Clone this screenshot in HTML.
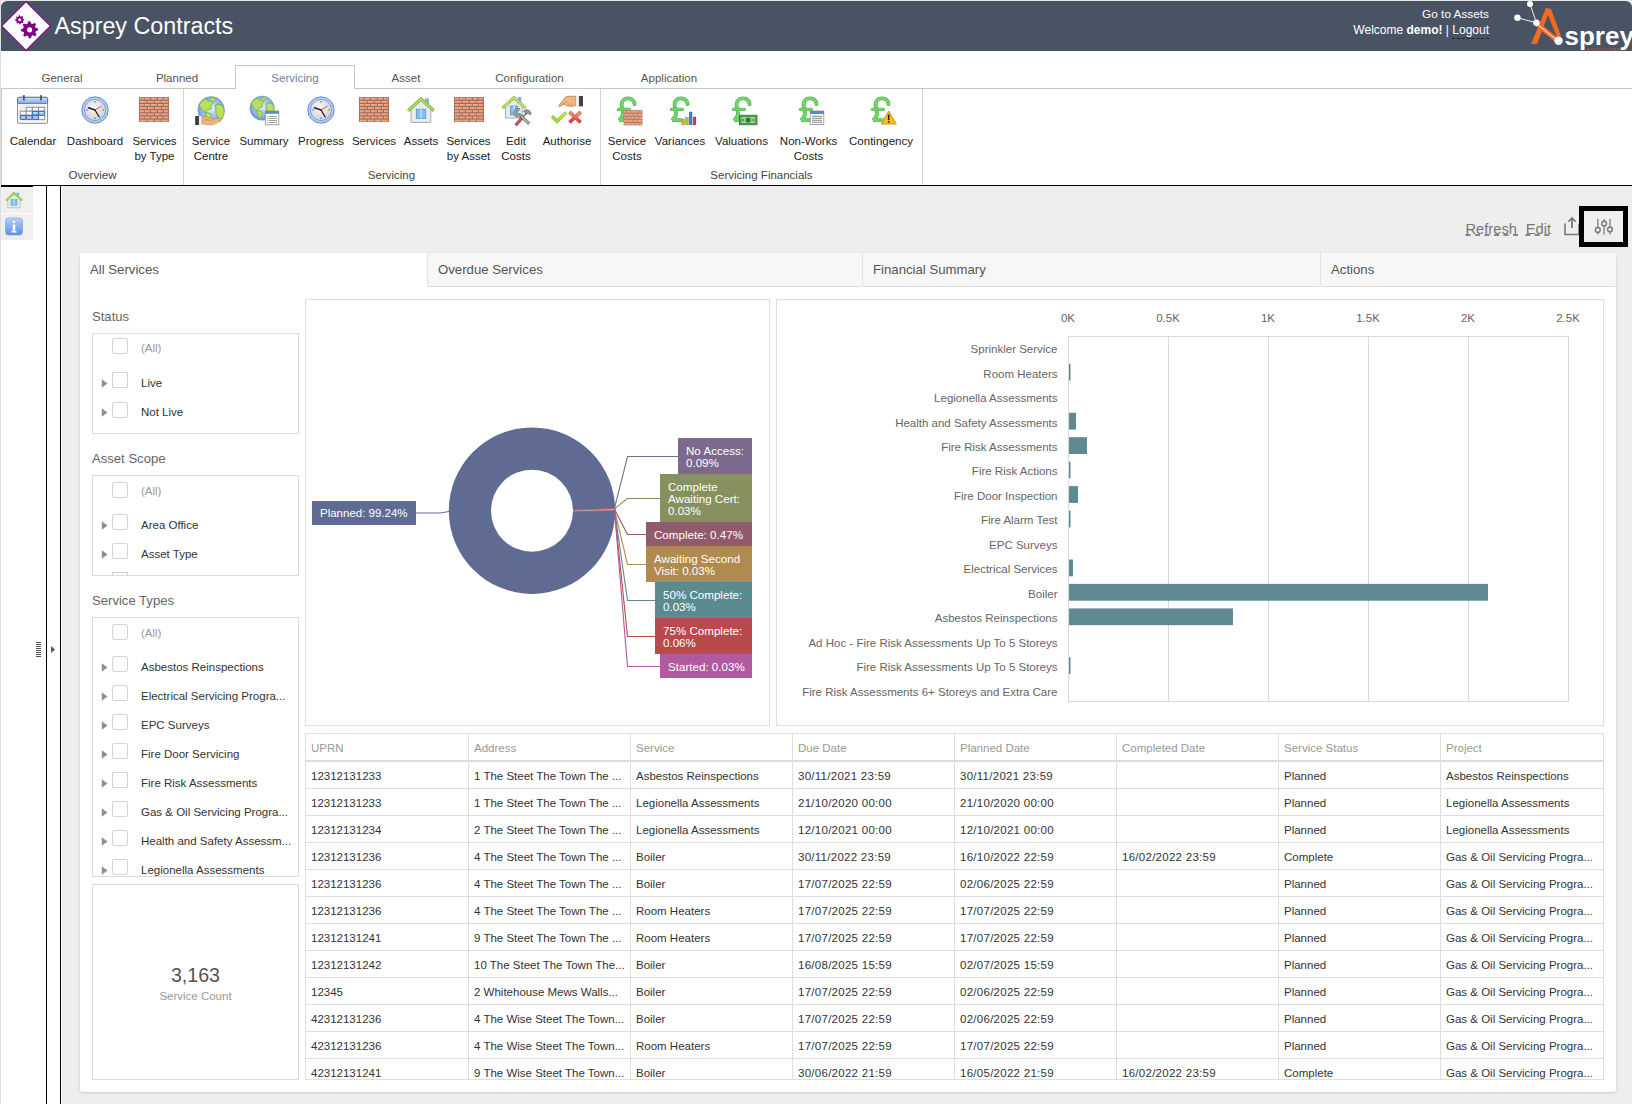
<!DOCTYPE html>
<html><head><meta charset="utf-8"><title>Asprey Contracts</title>
<style>
html,body{margin:0;padding:0;}
body{width:1632px;height:1104px;position:relative;overflow:hidden;background:#fff;font-family:"Liberation Sans", sans-serif;}
.t{position:absolute;white-space:nowrap;line-height:1;}
.b{position:absolute;box-sizing:border-box;}
</style></head><body>

<div class="b" style="left:0px;top:0px;width:1632px;height:1px;background:#e6e6e6"></div>
<div class="b" style="left:1px;top:1px;width:1631px;height:50px;background:#4a5364;border-radius:6px 6px 0 0"></div>
<svg class="b" style="left:0px;top:0px;" width="54" height="52" viewBox="0 0 54 52">
<polygon points="26,1.5 50.5,26 26,50.5 1.5,26" fill="#fff" stroke="#7a1a86" stroke-width="1.4"/>
<g fill="#800080"><polygon points="38.11,28.54 38.19,30.22 35.81,31.36 35.39,32.54 36.51,34.92 35.38,36.17 32.89,35.29 31.76,35.83 30.86,38.31 29.18,38.39 28.04,36.01 26.86,35.59 24.48,36.71 23.23,35.58 24.11,33.09 23.57,31.96 21.09,31.06 21.01,29.38 23.39,28.24 23.81,27.06 22.69,24.68 23.82,23.43 26.31,24.31 27.44,23.77 28.34,21.29 30.02,21.21 31.16,23.59 32.34,24.01 34.72,22.89 35.97,24.02 35.09,26.51 35.63,27.64"/><polygon points="24.25,19.13 24.29,20.03 23.00,20.63 22.77,21.25 23.39,22.54 22.79,23.21 21.45,22.72 20.85,23.00 20.37,24.35 19.47,24.39 18.87,23.10 18.25,22.87 16.96,23.49 16.29,22.89 16.78,21.55 16.50,20.95 15.15,20.47 15.11,19.57 16.40,18.97 16.63,18.35 16.01,17.06 16.61,16.39 17.95,16.88 18.55,16.60 19.03,15.25 19.93,15.21 20.53,16.50 21.15,16.73 22.44,16.11 23.11,16.71 22.62,18.05 22.90,18.65"/></g>
<circle cx="29.6" cy="29.8" r="2.6" fill="#fff"/>
<circle cx="19.7" cy="19.8" r="1.5" fill="#fff"/>
</svg>
<div class="t" style="left:54.5px;top:14.9px;font-size:23.3px;color:#fff;font-weight:normal;">Asprey Contracts</div>
<div class="t" style="left:689.0px;width:800px;text-align:right;top:8.7px;font-size:11.8px;color:#fff;font-weight:normal;">Go to Assets</div>
<div class="t" style="left:689px;width:800px;text-align:right;top:24.3px;font-size:12px;color:#fff">Welcome <b>demo!</b> | <span style="border-bottom:1px dashed #222;padding-bottom:1px">Logout</span></div>
<svg class="b" style="left:1500px;top:0px;" width="132" height="52" viewBox="0 0 132 52">
<polygon points="31,44 37,44 48,15 57,37 61,36 51,9 46,8" fill="#f26b21"/>
<line x1="37" y1="24" x2="58" y2="41" stroke="#f26b21" stroke-width="5"/>
<line x1="37" y1="24" x2="58" y2="41" stroke="#fff" stroke-width="1"/>
<line x1="30" y1="4" x2="36.4" y2="22.7" stroke="#fff" stroke-width="0.9"/>
<line x1="17.4" y1="17.8" x2="36.4" y2="22.7" stroke="#fff" stroke-width="0.9"/>
<circle cx="30" cy="4" r="3" fill="#fff"/>
<circle cx="17.4" cy="17.8" r="3.2" fill="#fff"/>
<circle cx="36.4" cy="22.7" r="3.2" fill="#fff"/>
<circle cx="58.5" cy="40.8" r="4.2" fill="#fff"/>
<text x="64.5" y="44.8" font-family="Liberation Sans" font-weight="bold" font-size="26" fill="#fff" letter-spacing="0">sprey</text>
<text x="87" y="50.5" font-family="Liberation Sans" font-size="4" fill="#d9692a" letter-spacing="1.2">SOLUTIONS</text>
</svg>
<svg style="position:absolute;width:0;height:0">
<defs>
<radialGradient id="gClockFace" cx="0.45" cy="0.4" r="0.7"><stop offset="0" stop-color="#fafafa"/><stop offset="1" stop-color="#c9c9c9"/></radialGradient>
<linearGradient id="gClockRing" x1="0" y1="0" x2="0" y2="1"><stop offset="0" stop-color="#a9c2f0"/><stop offset="1" stop-color="#4f7fd6"/></linearGradient>
<radialGradient id="gGlobe" cx="0.5" cy="0.45" r="0.6"><stop offset="0" stop-color="#e6f0fd"/><stop offset="0.65" stop-color="#8fb3ee"/><stop offset="1" stop-color="#5a86d6"/></radialGradient>
<linearGradient id="gBrick" x1="0" y1="0" x2="1" y2="1"><stop offset="0" stop-color="#f7b898"/><stop offset="1" stop-color="#df8f6e"/></linearGradient>
<linearGradient id="gCalHead" x1="0" y1="0" x2="0" y2="1"><stop offset="0" stop-color="#8ab3f0"/><stop offset="1" stop-color="#4d82d6"/></linearGradient>
<linearGradient id="gInfo" x1="0" y1="0" x2="0" y2="1"><stop offset="0" stop-color="#b6d0f7"/><stop offset="1" stop-color="#5f8fe4"/></linearGradient>















</defs>
</svg>
<div class="b" style="left:1px;top:88px;width:1631px;height:1px;background:#c6c6c6"></div>
<div class="b" style="left:1px;top:88px;width:1px;height:98px;background:#c6c6c6"></div>
<div class="b" style="left:235px;top:65px;width:120px;height:24px;background:#fff;border:1px solid #c6c6c6;border-bottom:none"></div>
<div class="t" style="left:-338.0px;width:800px;text-align:center;top:72.8px;font-size:11.5px;color:#555;font-weight:normal;">General</div>
<div class="t" style="left:-223.0px;width:800px;text-align:center;top:72.8px;font-size:11.5px;color:#555;font-weight:normal;">Planned</div>
<div class="t" style="left:6.0px;width:800px;text-align:center;top:72.8px;font-size:11.5px;color:#555;font-weight:normal;">Asset</div>
<div class="t" style="left:129.5px;width:800px;text-align:center;top:72.8px;font-size:11.5px;color:#555;font-weight:normal;">Configuration</div>
<div class="t" style="left:269.0px;width:800px;text-align:center;top:72.8px;font-size:11.5px;color:#555;font-weight:normal;">Application</div>
<div class="t" style="left:-105.0px;width:800px;text-align:center;top:72.8px;font-size:11.5px;color:#6e7fa3;font-weight:normal;">Servicing</div>
<div class="b" style="left:183px;top:89px;width:1px;height:96px;background:#d4d4d4"></div>
<div class="b" style="left:600px;top:89px;width:1px;height:96px;background:#d4d4d4"></div>
<div class="b" style="left:922px;top:89px;width:1px;height:96px;background:#d4d4d4"></div>
<div class="b" style="left:1px;top:185px;width:1631px;height:1px;background:#000"></div>
<div class="t" style="left:-367.0px;width:800px;text-align:center;top:136.1px;font-size:11.5px;color:#222;font-weight:normal;">Calendar</div>
<div class="t" style="left:-305.0px;width:800px;text-align:center;top:136.1px;font-size:11.5px;color:#222;font-weight:normal;">Dashboard</div>
<div class="t" style="left:-245.5px;width:800px;text-align:center;top:135.6px;font-size:11.5px;color:#222;font-weight:normal;">Services</div>
<div class="t" style="left:-245.5px;width:800px;text-align:center;top:150.6px;font-size:11.5px;color:#222;font-weight:normal;">by Type</div>
<div class="t" style="left:-189.0px;width:800px;text-align:center;top:135.6px;font-size:11.5px;color:#222;font-weight:normal;">Service</div>
<div class="t" style="left:-189.0px;width:800px;text-align:center;top:150.6px;font-size:11.5px;color:#222;font-weight:normal;">Centre</div>
<div class="t" style="left:-136.0px;width:800px;text-align:center;top:136.1px;font-size:11.5px;color:#222;font-weight:normal;">Summary</div>
<div class="t" style="left:-79.0px;width:800px;text-align:center;top:136.1px;font-size:11.5px;color:#222;font-weight:normal;">Progress</div>
<div class="t" style="left:-26.0px;width:800px;text-align:center;top:136.1px;font-size:11.5px;color:#222;font-weight:normal;">Services</div>
<div class="t" style="left:21.0px;width:800px;text-align:center;top:136.1px;font-size:11.5px;color:#222;font-weight:normal;">Assets</div>
<div class="t" style="left:68.5px;width:800px;text-align:center;top:135.6px;font-size:11.5px;color:#222;font-weight:normal;">Services</div>
<div class="t" style="left:68.5px;width:800px;text-align:center;top:150.6px;font-size:11.5px;color:#222;font-weight:normal;">by Asset</div>
<div class="t" style="left:116.0px;width:800px;text-align:center;top:135.6px;font-size:11.5px;color:#222;font-weight:normal;">Edit</div>
<div class="t" style="left:116.0px;width:800px;text-align:center;top:150.6px;font-size:11.5px;color:#222;font-weight:normal;">Costs</div>
<div class="t" style="left:167.0px;width:800px;text-align:center;top:136.1px;font-size:11.5px;color:#222;font-weight:normal;">Authorise</div>
<div class="t" style="left:227.0px;width:800px;text-align:center;top:135.6px;font-size:11.5px;color:#222;font-weight:normal;">Service</div>
<div class="t" style="left:227.0px;width:800px;text-align:center;top:150.6px;font-size:11.5px;color:#222;font-weight:normal;">Costs</div>
<div class="t" style="left:280.0px;width:800px;text-align:center;top:136.1px;font-size:11.5px;color:#222;font-weight:normal;">Variances</div>
<div class="t" style="left:341.5px;width:800px;text-align:center;top:136.1px;font-size:11.5px;color:#222;font-weight:normal;">Valuations</div>
<div class="t" style="left:408.5px;width:800px;text-align:center;top:135.6px;font-size:11.5px;color:#222;font-weight:normal;">Non-Works</div>
<div class="t" style="left:408.5px;width:800px;text-align:center;top:150.6px;font-size:11.5px;color:#222;font-weight:normal;">Costs</div>
<div class="t" style="left:481.0px;width:800px;text-align:center;top:136.1px;font-size:11.5px;color:#222;font-weight:normal;">Contingency</div>
<div class="t" style="left:-307.5px;width:800px;text-align:center;top:169.8px;font-size:11.5px;color:#444;font-weight:normal;">Overview</div>
<div class="t" style="left:-8.5px;width:800px;text-align:center;top:169.8px;font-size:11.5px;color:#444;font-weight:normal;">Servicing</div>
<div class="t" style="left:361.5px;width:800px;text-align:center;top:169.8px;font-size:11.5px;color:#444;font-weight:normal;">Servicing Financials</div>
<svg class="b" style="left:17.0px;top:94px" width="32" height="32" viewBox="0 0 32 32"><svg x="0" y="0" width="32" height="32" viewBox="0 0 32 32" style="overflow:visible">
<linearGradient id="gCalH2" x1="0" y1="0" x2="0" y2="1"><stop offset="0" stop-color="#cfe2fb"/><stop offset="1" stop-color="#7fa6e9"/></linearGradient>
<rect x="0.6" y="3.3" width="30" height="26" rx="1.3" fill="#fff" stroke="#888" stroke-width="1"/>
<rect x="0.6" y="3.3" width="30" height="6.3" rx="1.2" fill="url(#gCalH2)" stroke="#4b6fcb" stroke-width="0.9"/>
<rect x="2.4" y="11" width="26.4" height="16.5" fill="#ededed"/>
<rect x="9.2" y="13.3" width="6.10" height="3.90" fill="#fafafa" stroke="#8a8a8a" stroke-width="0.9"/><rect x="15.3" y="13.3" width="6.20" height="3.90" fill="#fafafa" stroke="#8a8a8a" stroke-width="0.9"/><rect x="21.5" y="13.3" width="6.20" height="3.90" fill="#fafafa" stroke="#8a8a8a" stroke-width="0.9"/><rect x="3.2" y="17.2" width="6.00" height="4.10" fill="#fafafa" stroke="#8a8a8a" stroke-width="0.9"/><rect x="9.2" y="17.2" width="6.10" height="4.10" fill="#fafafa" stroke="#8a8a8a" stroke-width="0.9"/><rect x="21.5" y="21.3" width="6.20" height="4.30" fill="#fafafa" stroke="#8a8a8a" stroke-width="0.9"/><rect x="15.50" y="17.40" width="5.80" height="3.70" rx="0.8" fill="#cdeefc" stroke="#3f6fc6" stroke-width="1.3"/><path d="M16.90 19.25 H19.90" stroke="#7cc4f0" stroke-width="0.9"/><rect x="21.70" y="17.40" width="5.80" height="3.70" rx="0.8" fill="#cdeefc" stroke="#3f6fc6" stroke-width="1.3"/><path d="M23.10 19.25 H26.10" stroke="#7cc4f0" stroke-width="0.9"/><rect x="3.40" y="21.50" width="5.60" height="3.90" rx="0.8" fill="#cdeefc" stroke="#3f6fc6" stroke-width="1.3"/><path d="M4.80 23.45 H7.60" stroke="#7cc4f0" stroke-width="0.9"/><rect x="9.40" y="21.50" width="5.70" height="3.90" rx="0.8" fill="#cdeefc" stroke="#3f6fc6" stroke-width="1.3"/><path d="M10.80 23.45 H13.70" stroke="#7cc4f0" stroke-width="0.9"/><rect x="15.50" y="21.50" width="5.80" height="3.90" rx="0.8" fill="#cdeefc" stroke="#3f6fc6" stroke-width="1.3"/><path d="M16.90 23.45 H19.90" stroke="#7cc4f0" stroke-width="0.9"/>
<rect x="6" y="1.1" width="1.8" height="5.5" rx="0.6" fill="#555"/><rect x="23.1" y="1.1" width="1.8" height="5.5" rx="0.6" fill="#555"/>
</svg></svg>
<svg class="b" style="left:79.0px;top:94px" width="32" height="32" viewBox="0 0 32 32"><svg x="0" y="0" width="32" height="32" viewBox="0 0 32 32" style="overflow:visible">
<circle cx="16" cy="16" r="13.2" fill="#9fbff3" stroke="#5f86d6" stroke-width="0.9"/>
<circle cx="16" cy="16" r="11.8" fill="none" stroke="#c8dcfa" stroke-width="0.8"/>
<circle cx="16" cy="16" r="10.6" fill="url(#gClockFace)" stroke="#6a8fdc" stroke-width="0.7"/>
<rect x="15.3" y="7.2" width="1.4" height="1.4" fill="#777"/><rect x="15.3" y="23.4" width="1.4" height="1.4" fill="#777"/>
<rect x="7.2" y="15.3" width="1.4" height="1.4" fill="#777"/><rect x="23.4" y="15.3" width="1.4" height="1.4" fill="#777"/>
<path d="M16 16 L9.5 13.8" stroke="#222" stroke-width="1.6" stroke-linecap="round"/>
<path d="M16 16 L20.2 23" stroke="#222" stroke-width="1.3" stroke-linecap="round"/>
<path d="M16 16 L22.5 12.2" stroke="#d22" stroke-width="0.8"/>
</svg></svg>
<svg class="b" style="left:138.0px;top:94px" width="32" height="32" viewBox="0 0 32 32"><svg x="0" y="0" width="32" height="32" viewBox="0 0 32 32" style="overflow:visible"><rect x="1" y="3" width="30" height="25" fill="#9c6b59"/><rect x="1.90" y="3.75" width="4.20" height="2.02" fill="url(#gBrick)"/><rect x="6.80" y="3.75" width="5.40" height="2.02" fill="url(#gBrick)"/><rect x="13.10" y="3.75" width="5.90" height="2.02" fill="url(#gBrick)"/><rect x="19.90" y="3.75" width="5.20" height="2.02" fill="url(#gBrick)"/><rect x="26.00" y="3.75" width="4.20" height="2.02" fill="url(#gBrick)"/><rect x="1.90" y="6.88" width="7.30" height="2.02" fill="url(#gBrick)"/><rect x="9.90" y="6.88" width="6.20" height="2.02" fill="url(#gBrick)"/><rect x="17.00" y="6.88" width="6.10" height="2.02" fill="url(#gBrick)"/><rect x="23.90" y="6.88" width="6.30" height="2.02" fill="url(#gBrick)"/><rect x="1.90" y="10.00" width="4.20" height="2.02" fill="url(#gBrick)"/><rect x="6.80" y="10.00" width="5.40" height="2.02" fill="url(#gBrick)"/><rect x="13.10" y="10.00" width="5.90" height="2.02" fill="url(#gBrick)"/><rect x="19.90" y="10.00" width="5.20" height="2.02" fill="url(#gBrick)"/><rect x="26.00" y="10.00" width="4.20" height="2.02" fill="url(#gBrick)"/><rect x="1.90" y="13.12" width="7.30" height="2.02" fill="url(#gBrick)"/><rect x="9.90" y="13.12" width="6.20" height="2.02" fill="url(#gBrick)"/><rect x="17.00" y="13.12" width="6.10" height="2.02" fill="url(#gBrick)"/><rect x="23.90" y="13.12" width="6.30" height="2.02" fill="url(#gBrick)"/><rect x="1.90" y="16.25" width="4.20" height="2.02" fill="url(#gBrick)"/><rect x="6.80" y="16.25" width="5.40" height="2.02" fill="url(#gBrick)"/><rect x="13.10" y="16.25" width="5.90" height="2.02" fill="url(#gBrick)"/><rect x="19.90" y="16.25" width="5.20" height="2.02" fill="url(#gBrick)"/><rect x="26.00" y="16.25" width="4.20" height="2.02" fill="url(#gBrick)"/><rect x="1.90" y="19.38" width="7.30" height="2.02" fill="url(#gBrick)"/><rect x="9.90" y="19.38" width="6.20" height="2.02" fill="url(#gBrick)"/><rect x="17.00" y="19.38" width="6.10" height="2.02" fill="url(#gBrick)"/><rect x="23.90" y="19.38" width="6.30" height="2.02" fill="url(#gBrick)"/><rect x="1.90" y="22.50" width="4.20" height="2.02" fill="url(#gBrick)"/><rect x="6.80" y="22.50" width="5.40" height="2.02" fill="url(#gBrick)"/><rect x="13.10" y="22.50" width="5.90" height="2.02" fill="url(#gBrick)"/><rect x="19.90" y="22.50" width="5.20" height="2.02" fill="url(#gBrick)"/><rect x="26.00" y="22.50" width="4.20" height="2.02" fill="url(#gBrick)"/><rect x="1.90" y="25.62" width="7.30" height="2.02" fill="url(#gBrick)"/><rect x="9.90" y="25.62" width="6.20" height="2.02" fill="url(#gBrick)"/><rect x="17.00" y="25.62" width="6.10" height="2.02" fill="url(#gBrick)"/><rect x="23.90" y="25.62" width="6.30" height="2.02" fill="url(#gBrick)"/></svg></svg>
<svg class="b" style="left:195.0px;top:94px" width="32" height="32" viewBox="0 0 32 32"><svg x="0" y="0" width="32" height="32" viewBox="0 0 32 32" style="overflow:visible">
<g transform="translate(0.9,1.6) scale(0.95)"><svg x="0" y="0" width="32" height="32" viewBox="0 0 32 32" style="overflow:visible">
<circle cx="16" cy="15" r="14" fill="url(#gGlobe)" stroke="#6a90d8" stroke-width="0.5"/>
<g fill="#b8e05c" stroke="#64a030" stroke-width="0.7">
<path d="M3.5 10 C5 6.5 8 4 11 3.5 L12.5 4.5 C12 6 13.5 6.5 15 5.5 L17.5 6.5 C18.5 8 16.5 9 16 10.5 C15.5 12 17 12.5 16 14 C14 15 12.5 14 11.5 15.5 C10.5 16.5 11 17.5 10.5 18 C8 17 6 15 5 13 C4.5 12 3.5 11 3.5 10Z"/>
<path d="M14 3 C16 2 19 1.8 21.5 2.8 C20.5 5 18.5 7 17 6.8 C15.8 5.8 15 4.5 14 3Z"/>
<path d="M10.5 18 C12.5 17.5 14.5 18.5 16 19.5 C17 21 16 22.5 14.8 24 C13.8 25.5 13 27 12.5 28 C11.5 26 11.2 23.5 10.8 21.5 C10.3 20.2 10 19 10.5 18Z"/>
<path d="M21 9.5 C23 8.5 26 9 28 10.5 C29.5 13 30 16 29.5 19.5 C29 22.5 27 25.5 25 27.5 C24 25.5 24 23.5 23 21.5 C22 19.5 20.5 18.5 21 16.5 C21.5 14.5 20 12 21 9.5Z"/>
</g>
</svg></g>
<rect x="0.2" y="22" width="3.8" height="9" fill="#3a3a3a"/>
<rect x="4" y="22" width="3" height="9" fill="#f2f2f2" stroke="#bbb" stroke-width="0.4"/>
<path d="M7 23 C10 22.5 14 23 17 25 C20 25.3 24 24 27 23.5 C26 26.5 22 30 16.5 31 C12.5 31.2 9.5 30.5 7 29.5Z" fill="#edb57d" stroke="#b98050" stroke-width="0.5"/>
<path d="M9 26 C12 25.5 15 26 17 27" fill="none" stroke="#b98050" stroke-width="0.6"/>
</svg></svg>
<svg class="b" style="left:248.0px;top:94px" width="32" height="32" viewBox="0 0 32 32"><svg x="0" y="0" width="32" height="32" viewBox="0 0 32 32" style="overflow:visible">
<g transform="translate(0.2,1.1) scale(0.87)"><svg x="0" y="0" width="32" height="32" viewBox="0 0 32 32" style="overflow:visible">
<circle cx="16" cy="15" r="14" fill="url(#gGlobe)" stroke="#6a90d8" stroke-width="0.5"/>
<g fill="#b8e05c" stroke="#64a030" stroke-width="0.7">
<path d="M3.5 10 C5 6.5 8 4 11 3.5 L12.5 4.5 C12 6 13.5 6.5 15 5.5 L17.5 6.5 C18.5 8 16.5 9 16 10.5 C15.5 12 17 12.5 16 14 C14 15 12.5 14 11.5 15.5 C10.5 16.5 11 17.5 10.5 18 C8 17 6 15 5 13 C4.5 12 3.5 11 3.5 10Z"/>
<path d="M14 3 C16 2 19 1.8 21.5 2.8 C20.5 5 18.5 7 17 6.8 C15.8 5.8 15 4.5 14 3Z"/>
<path d="M10.5 18 C12.5 17.5 14.5 18.5 16 19.5 C17 21 16 22.5 14.8 24 C13.8 25.5 13 27 12.5 28 C11.5 26 11.2 23.5 10.8 21.5 C10.3 20.2 10 19 10.5 18Z"/>
<path d="M21 9.5 C23 8.5 26 9 28 10.5 C29.5 13 30 16 29.5 19.5 C29 22.5 27 25.5 25 27.5 C24 25.5 24 23.5 23 21.5 C22 19.5 20.5 18.5 21 16.5 C21.5 14.5 20 12 21 9.5Z"/>
</g>
</svg></g>
<rect x="17.3" y="17" width="13.5" height="13.8" fill="#fff" stroke="#8c8c8c" stroke-width="0.8"/>
<rect x="17.3" y="17" width="13.5" height="2.8" fill="#4f8ed0"/>
<g stroke="#666" stroke-width="0.6"><path d="M19 22.5 H20 M21 22.5 H29"/><path d="M19 24.5 H20 M21 24.5 H29"/><path d="M19 26.5 H20 M21 26.5 H29"/><path d="M19 28.5 H20 M21 28.5 H29"/></g>
</svg></svg>
<svg class="b" style="left:305.0px;top:94px" width="32" height="32" viewBox="0 0 32 32"><svg x="0" y="0" width="32" height="32" viewBox="0 0 32 32" style="overflow:visible">
<circle cx="16" cy="16" r="13.2" fill="#9fbff3" stroke="#5f86d6" stroke-width="0.9"/>
<circle cx="16" cy="16" r="11.8" fill="none" stroke="#c8dcfa" stroke-width="0.8"/>
<circle cx="16" cy="16" r="10.6" fill="url(#gClockFace)" stroke="#6a8fdc" stroke-width="0.7"/>
<rect x="15.3" y="7.2" width="1.4" height="1.4" fill="#777"/><rect x="15.3" y="23.4" width="1.4" height="1.4" fill="#777"/>
<rect x="7.2" y="15.3" width="1.4" height="1.4" fill="#777"/><rect x="23.4" y="15.3" width="1.4" height="1.4" fill="#777"/>
<path d="M16 16 L9.5 13.8" stroke="#222" stroke-width="1.6" stroke-linecap="round"/>
<path d="M16 16 L20.2 23" stroke="#222" stroke-width="1.3" stroke-linecap="round"/>
<path d="M16 16 L22.5 12.2" stroke="#d22" stroke-width="0.8"/>
</svg></svg>
<svg class="b" style="left:358.0px;top:94px" width="32" height="32" viewBox="0 0 32 32"><svg x="0" y="0" width="32" height="32" viewBox="0 0 32 32" style="overflow:visible"><rect x="1" y="3" width="30" height="25" fill="#9c6b59"/><rect x="1.90" y="3.75" width="4.20" height="2.02" fill="url(#gBrick)"/><rect x="6.80" y="3.75" width="5.40" height="2.02" fill="url(#gBrick)"/><rect x="13.10" y="3.75" width="5.90" height="2.02" fill="url(#gBrick)"/><rect x="19.90" y="3.75" width="5.20" height="2.02" fill="url(#gBrick)"/><rect x="26.00" y="3.75" width="4.20" height="2.02" fill="url(#gBrick)"/><rect x="1.90" y="6.88" width="7.30" height="2.02" fill="url(#gBrick)"/><rect x="9.90" y="6.88" width="6.20" height="2.02" fill="url(#gBrick)"/><rect x="17.00" y="6.88" width="6.10" height="2.02" fill="url(#gBrick)"/><rect x="23.90" y="6.88" width="6.30" height="2.02" fill="url(#gBrick)"/><rect x="1.90" y="10.00" width="4.20" height="2.02" fill="url(#gBrick)"/><rect x="6.80" y="10.00" width="5.40" height="2.02" fill="url(#gBrick)"/><rect x="13.10" y="10.00" width="5.90" height="2.02" fill="url(#gBrick)"/><rect x="19.90" y="10.00" width="5.20" height="2.02" fill="url(#gBrick)"/><rect x="26.00" y="10.00" width="4.20" height="2.02" fill="url(#gBrick)"/><rect x="1.90" y="13.12" width="7.30" height="2.02" fill="url(#gBrick)"/><rect x="9.90" y="13.12" width="6.20" height="2.02" fill="url(#gBrick)"/><rect x="17.00" y="13.12" width="6.10" height="2.02" fill="url(#gBrick)"/><rect x="23.90" y="13.12" width="6.30" height="2.02" fill="url(#gBrick)"/><rect x="1.90" y="16.25" width="4.20" height="2.02" fill="url(#gBrick)"/><rect x="6.80" y="16.25" width="5.40" height="2.02" fill="url(#gBrick)"/><rect x="13.10" y="16.25" width="5.90" height="2.02" fill="url(#gBrick)"/><rect x="19.90" y="16.25" width="5.20" height="2.02" fill="url(#gBrick)"/><rect x="26.00" y="16.25" width="4.20" height="2.02" fill="url(#gBrick)"/><rect x="1.90" y="19.38" width="7.30" height="2.02" fill="url(#gBrick)"/><rect x="9.90" y="19.38" width="6.20" height="2.02" fill="url(#gBrick)"/><rect x="17.00" y="19.38" width="6.10" height="2.02" fill="url(#gBrick)"/><rect x="23.90" y="19.38" width="6.30" height="2.02" fill="url(#gBrick)"/><rect x="1.90" y="22.50" width="4.20" height="2.02" fill="url(#gBrick)"/><rect x="6.80" y="22.50" width="5.40" height="2.02" fill="url(#gBrick)"/><rect x="13.10" y="22.50" width="5.90" height="2.02" fill="url(#gBrick)"/><rect x="19.90" y="22.50" width="5.20" height="2.02" fill="url(#gBrick)"/><rect x="26.00" y="22.50" width="4.20" height="2.02" fill="url(#gBrick)"/><rect x="1.90" y="25.62" width="7.30" height="2.02" fill="url(#gBrick)"/><rect x="9.90" y="25.62" width="6.20" height="2.02" fill="url(#gBrick)"/><rect x="17.00" y="25.62" width="6.10" height="2.02" fill="url(#gBrick)"/><rect x="23.90" y="25.62" width="6.30" height="2.02" fill="url(#gBrick)"/></svg></svg>
<svg class="b" style="left:405.0px;top:94px" width="32" height="32" viewBox="0 0 32 32"><svg x="0" y="0" width="32" height="32" viewBox="0 0 32 32" style="overflow:visible">
<rect x="20" y="4.4" width="4" height="7" fill="#8bb0e6"/>
<path d="M6 13 L6 28.5 L25.8 28.5 L25.8 13 L16 5Z" fill="#e9eaec" stroke="#a4a4a4" stroke-width="0.9"/>
<rect x="11.3" y="15.2" width="9.5" height="9.3" fill="#7cc1f5" stroke="#5a8fc8" stroke-width="0.7"/>
<rect x="15.4" y="15.2" width="1.3" height="9.3" fill="#d0e6f7"/>
<path d="M3.2 16.8 L16 5 L28.8 16.8" fill="none" stroke="#79b03a" stroke-width="3.2" stroke-linejoin="miter"/>
<path d="M3.2 16.8 L16 5 L28.8 16.8" fill="none" stroke="#acdc60" stroke-width="1.8" stroke-linejoin="miter"/>
</svg></svg>
<svg class="b" style="left:453.0px;top:94px" width="32" height="32" viewBox="0 0 32 32"><svg x="0" y="0" width="32" height="32" viewBox="0 0 32 32" style="overflow:visible"><rect x="1" y="3" width="30" height="25" fill="#9c6b59"/><rect x="1.90" y="3.75" width="4.20" height="2.02" fill="url(#gBrick)"/><rect x="6.80" y="3.75" width="5.40" height="2.02" fill="url(#gBrick)"/><rect x="13.10" y="3.75" width="5.90" height="2.02" fill="url(#gBrick)"/><rect x="19.90" y="3.75" width="5.20" height="2.02" fill="url(#gBrick)"/><rect x="26.00" y="3.75" width="4.20" height="2.02" fill="url(#gBrick)"/><rect x="1.90" y="6.88" width="7.30" height="2.02" fill="url(#gBrick)"/><rect x="9.90" y="6.88" width="6.20" height="2.02" fill="url(#gBrick)"/><rect x="17.00" y="6.88" width="6.10" height="2.02" fill="url(#gBrick)"/><rect x="23.90" y="6.88" width="6.30" height="2.02" fill="url(#gBrick)"/><rect x="1.90" y="10.00" width="4.20" height="2.02" fill="url(#gBrick)"/><rect x="6.80" y="10.00" width="5.40" height="2.02" fill="url(#gBrick)"/><rect x="13.10" y="10.00" width="5.90" height="2.02" fill="url(#gBrick)"/><rect x="19.90" y="10.00" width="5.20" height="2.02" fill="url(#gBrick)"/><rect x="26.00" y="10.00" width="4.20" height="2.02" fill="url(#gBrick)"/><rect x="1.90" y="13.12" width="7.30" height="2.02" fill="url(#gBrick)"/><rect x="9.90" y="13.12" width="6.20" height="2.02" fill="url(#gBrick)"/><rect x="17.00" y="13.12" width="6.10" height="2.02" fill="url(#gBrick)"/><rect x="23.90" y="13.12" width="6.30" height="2.02" fill="url(#gBrick)"/><rect x="1.90" y="16.25" width="4.20" height="2.02" fill="url(#gBrick)"/><rect x="6.80" y="16.25" width="5.40" height="2.02" fill="url(#gBrick)"/><rect x="13.10" y="16.25" width="5.90" height="2.02" fill="url(#gBrick)"/><rect x="19.90" y="16.25" width="5.20" height="2.02" fill="url(#gBrick)"/><rect x="26.00" y="16.25" width="4.20" height="2.02" fill="url(#gBrick)"/><rect x="1.90" y="19.38" width="7.30" height="2.02" fill="url(#gBrick)"/><rect x="9.90" y="19.38" width="6.20" height="2.02" fill="url(#gBrick)"/><rect x="17.00" y="19.38" width="6.10" height="2.02" fill="url(#gBrick)"/><rect x="23.90" y="19.38" width="6.30" height="2.02" fill="url(#gBrick)"/><rect x="1.90" y="22.50" width="4.20" height="2.02" fill="url(#gBrick)"/><rect x="6.80" y="22.50" width="5.40" height="2.02" fill="url(#gBrick)"/><rect x="13.10" y="22.50" width="5.90" height="2.02" fill="url(#gBrick)"/><rect x="19.90" y="22.50" width="5.20" height="2.02" fill="url(#gBrick)"/><rect x="26.00" y="22.50" width="4.20" height="2.02" fill="url(#gBrick)"/><rect x="1.90" y="25.62" width="7.30" height="2.02" fill="url(#gBrick)"/><rect x="9.90" y="25.62" width="6.20" height="2.02" fill="url(#gBrick)"/><rect x="17.00" y="25.62" width="6.10" height="2.02" fill="url(#gBrick)"/><rect x="23.90" y="25.62" width="6.30" height="2.02" fill="url(#gBrick)"/></svg></svg>
<svg class="b" style="left:500.0px;top:94px" width="32" height="32" viewBox="0 0 32 32"><svg x="0" y="0" width="32" height="32" viewBox="0 0 32 32" style="overflow:visible">
<rect x="18" y="3" width="3.2" height="6" fill="#8bb0e6"/>
<path d="M5.5 12 L5.5 24 L22.3 24 L22.3 12 L14 5Z" fill="#e9eaec" stroke="#a4a4a4" stroke-width="0.9"/>
<rect x="10.3" y="12" width="7.5" height="9" fill="#7cc1f5" stroke="#5a8fc8" stroke-width="0.7"/>
<rect x="13.5" y="12" width="1.2" height="9" fill="#cfe6f7"/>
<path d="M2.4 14 L14 3.6 L25.5 14" fill="none" stroke="#7db53a" stroke-width="2.9" stroke-linejoin="miter"/>
<path d="M2.4 14 L14 3.6 L25.5 14" fill="none" stroke="#c2e874" stroke-width="1.6" stroke-linejoin="miter"/>
<path d="M22.5 23.5 L16.6 30.3" stroke="#7a3a44" stroke-width="3.2" stroke-linecap="round"/>
<path d="M22.5 23.5 L16.6 30.3" stroke="#c75a6a" stroke-width="2.1" stroke-linecap="round"/>
<path d="M22 24 L26.3 19" stroke="#777" stroke-width="1.6"/>
<path d="M23.5 17 C25.5 15.3 28.5 15.3 31 18.5 L30.5 21 C29 19.5 27.5 19.2 26.5 20.2 Z" fill="#9a9a9a" stroke="#555" stroke-width="0.7"/>
<path d="M18.5 19.8 L29.3 29.8" stroke="#555" stroke-width="3"/>
<path d="M18.5 19.8 L29.3 29.8" stroke="#c4c4c4" stroke-width="1.6"/>
<path d="M19.6 15.8 A3.3 3.3 0 1 0 20.7 20.8" fill="none" stroke="#555" stroke-width="2.6"/>
<path d="M19.6 15.8 A3.3 3.3 0 1 0 20.7 20.8" fill="none" stroke="#bdbdbd" stroke-width="1.2"/>
</svg></svg>
<svg class="b" style="left:551.0px;top:94px" width="32" height="32" viewBox="0 0 32 32"><svg x="0" y="0" width="32" height="32" viewBox="0 0 32 32" style="overflow:visible">
<linearGradient id="gX" x1="0" y1="0" x2="0" y2="1"><stop offset="0" stop-color="#ec9a6c"/><stop offset="1" stop-color="#de4040"/></linearGradient>
<linearGradient id="gChk" x1="0" y1="1" x2="1" y2="0"><stop offset="0" stop-color="#9ccc30"/><stop offset="1" stop-color="#cfe860"/></linearGradient>
<path d="M7.7 11.9 L14.5 3.2 C15.2 2.5 16 2.2 17 2.2 L25 2.4 L25 11.6 L22.2 12 C21.2 12.8 19.9 12.7 19.3 11.9 C18.6 12.4 17.3 12.3 16.8 11.6 C16 12.1 14.9 11.9 14.5 11.1 L13 10 L8.8 12.6Z" fill="#efb782" stroke="#a86e3a" stroke-width="0.7" stroke-linejoin="round"/>
<path d="M12.5 9.8 L16.5 7.2 M16.3 11.4 L18.8 9 M19.2 11.8 L21.6 9.4" stroke="#b27a45" stroke-width="0.6"/>
<rect x="25" y="2" width="2.9" height="10.3" fill="#f4f4f4" stroke="#c8c8c8" stroke-width="0.4"/>
<rect x="28" y="2" width="4" height="10.3" fill="#444"/>
<path d="M2.2 23.4 L6.1 27.3 L14 19.6" fill="none" stroke="#8ab52e" stroke-width="3.4" stroke-linecap="square"/>
<path d="M2.2 23.4 L6.1 27.3 L14 19.6" fill="none" stroke="url(#gChk)" stroke-width="2.4" stroke-linecap="square"/>
<path d="M19.8 19.2 L28.4 27.2 M28.4 19.2 L19.8 27.2" stroke="#d84848" stroke-width="3.6" stroke-linecap="square"/>
<path d="M19.8 19.2 L28.4 27.2 M28.4 19.2 L19.8 27.2" stroke="url(#gX)" stroke-width="2.4" stroke-linecap="square"/>
</svg></svg>
<svg class="b" style="left:611.0px;top:94px" width="32" height="32" viewBox="0 0 32 32"><svg x="0" y="0" width="32" height="32" viewBox="0 0 32 32" style="overflow:visible"><svg x="0" y="0" width="32" height="32" viewBox="0 0 32 32" style="overflow:visible">
<g transform="translate(6.4,2.6)">
<path d="M17.2 7.5 C16.5 3.8 13.8 1.8 10.5 1.8 C6.5 1.8 4 4.5 4.2 8.5 C4.4 12 5.6 14 5.6 17 C5.6 20 3.8 22 1.8 23.8 C5 22.6 7.5 23.2 11.5 23.8" fill="none" stroke="#4fae46" stroke-width="3.8" stroke-linecap="round"/>
<path d="M17.2 7.5 C16.5 3.8 13.8 1.8 10.5 1.8 C6.5 1.8 4 4.5 4.2 8.5 C4.4 12 5.6 14 5.6 17 C5.6 20 3.8 22 1.8 23.8 C5 22.6 7.5 23.2 11.5 23.8" fill="none" stroke="#71d66b" stroke-width="2.6" stroke-linecap="round"/>
<path d="M1.2 12.8 H11.8" stroke="#4fae46" stroke-width="3.4" stroke-linecap="round"/>
<path d="M1.2 12.8 H11.8" stroke="#71d66b" stroke-width="2.2" stroke-linecap="round"/>
</g>
</svg><rect x="12.7" y="16.1" width="18.7" height="15.2" fill="#9c6b59"/><rect x="13.26" y="16.57" width="2.62" height="2.35" fill="url(#gBrick)"/><rect x="16.32" y="16.57" width="3.37" height="2.35" fill="url(#gBrick)"/><rect x="20.24" y="16.57" width="3.68" height="2.35" fill="url(#gBrick)"/><rect x="24.48" y="16.57" width="3.24" height="2.35" fill="url(#gBrick)"/><rect x="28.28" y="16.57" width="2.62" height="2.35" fill="url(#gBrick)"/><rect x="13.26" y="19.61" width="4.55" height="2.35" fill="url(#gBrick)"/><rect x="18.25" y="19.61" width="3.86" height="2.35" fill="url(#gBrick)"/><rect x="22.67" y="19.61" width="3.80" height="2.35" fill="url(#gBrick)"/><rect x="26.97" y="19.61" width="3.93" height="2.35" fill="url(#gBrick)"/><rect x="13.26" y="22.65" width="2.62" height="2.35" fill="url(#gBrick)"/><rect x="16.32" y="22.65" width="3.37" height="2.35" fill="url(#gBrick)"/><rect x="20.24" y="22.65" width="3.68" height="2.35" fill="url(#gBrick)"/><rect x="24.48" y="22.65" width="3.24" height="2.35" fill="url(#gBrick)"/><rect x="28.28" y="22.65" width="2.62" height="2.35" fill="url(#gBrick)"/><rect x="13.26" y="25.69" width="4.55" height="2.35" fill="url(#gBrick)"/><rect x="18.25" y="25.69" width="3.86" height="2.35" fill="url(#gBrick)"/><rect x="22.67" y="25.69" width="3.80" height="2.35" fill="url(#gBrick)"/><rect x="26.97" y="25.69" width="3.93" height="2.35" fill="url(#gBrick)"/><rect x="13.26" y="28.73" width="2.62" height="2.35" fill="url(#gBrick)"/><rect x="16.32" y="28.73" width="3.37" height="2.35" fill="url(#gBrick)"/><rect x="20.24" y="28.73" width="3.68" height="2.35" fill="url(#gBrick)"/><rect x="24.48" y="28.73" width="3.24" height="2.35" fill="url(#gBrick)"/><rect x="28.28" y="28.73" width="2.62" height="2.35" fill="url(#gBrick)"/></svg></svg>
<svg class="b" style="left:664.0px;top:94px" width="32" height="32" viewBox="0 0 32 32"><svg x="0" y="0" width="32" height="32" viewBox="0 0 32 32" style="overflow:visible"><svg x="0" y="0" width="32" height="32" viewBox="0 0 32 32" style="overflow:visible">
<g transform="translate(6.4,2.6)">
<path d="M17.2 7.5 C16.5 3.8 13.8 1.8 10.5 1.8 C6.5 1.8 4 4.5 4.2 8.5 C4.4 12 5.6 14 5.6 17 C5.6 20 3.8 22 1.8 23.8 C5 22.6 7.5 23.2 11.5 23.8" fill="none" stroke="#4fae46" stroke-width="3.8" stroke-linecap="round"/>
<path d="M17.2 7.5 C16.5 3.8 13.8 1.8 10.5 1.8 C6.5 1.8 4 4.5 4.2 8.5 C4.4 12 5.6 14 5.6 17 C5.6 20 3.8 22 1.8 23.8 C5 22.6 7.5 23.2 11.5 23.8" fill="none" stroke="#71d66b" stroke-width="2.6" stroke-linecap="round"/>
<path d="M1.2 12.8 H11.8" stroke="#4fae46" stroke-width="3.4" stroke-linecap="round"/>
<path d="M1.2 12.8 H11.8" stroke="#71d66b" stroke-width="2.2" stroke-linecap="round"/>
</g>
</svg>
<rect x="17.9" y="25.5" width="2.6" height="5.3" fill="#f0a040" stroke="#c07a20" stroke-width="0.4"/>
<rect x="21.5" y="23.4" width="2.7" height="7.4" fill="#9ccc3c" stroke="#6a9a20" stroke-width="0.4"/>
<rect x="25.2" y="18" width="2.8" height="12.8" fill="#3f7fe0" stroke="#2a5ab0" stroke-width="0.4"/>
<rect x="29.1" y="23" width="2.9" height="7.8" fill="#d83a4a" stroke="#a02030" stroke-width="0.4"/>
</svg></svg>
<svg class="b" style="left:726.0px;top:94px" width="32" height="32" viewBox="0 0 32 32"><svg x="0" y="0" width="32" height="32" viewBox="0 0 32 32" style="overflow:visible"><svg x="0" y="0" width="32" height="32" viewBox="0 0 32 32" style="overflow:visible">
<g transform="translate(6.4,2.6)">
<path d="M17.2 7.5 C16.5 3.8 13.8 1.8 10.5 1.8 C6.5 1.8 4 4.5 4.2 8.5 C4.4 12 5.6 14 5.6 17 C5.6 20 3.8 22 1.8 23.8 C5 22.6 7.5 23.2 11.5 23.8" fill="none" stroke="#4fae46" stroke-width="3.8" stroke-linecap="round"/>
<path d="M17.2 7.5 C16.5 3.8 13.8 1.8 10.5 1.8 C6.5 1.8 4 4.5 4.2 8.5 C4.4 12 5.6 14 5.6 17 C5.6 20 3.8 22 1.8 23.8 C5 22.6 7.5 23.2 11.5 23.8" fill="none" stroke="#71d66b" stroke-width="2.6" stroke-linecap="round"/>
<path d="M1.2 12.8 H11.8" stroke="#4fae46" stroke-width="3.4" stroke-linecap="round"/>
<path d="M1.2 12.8 H11.8" stroke="#71d66b" stroke-width="2.2" stroke-linecap="round"/>
</g>
</svg>
<rect x="13.4" y="21.2" width="17.6" height="9.6" fill="#56a856" stroke="#2f7a2f" stroke-width="0.8"/>
<rect x="15" y="22.7" width="14.4" height="6.6" fill="#9ad49a" stroke="#2f7a2f" stroke-width="0.5"/>
<circle cx="22.2" cy="26" r="2.6" fill="#2f7a2f"/><circle cx="17" cy="26" r="0.9" fill="#2f7a2f"/><circle cx="27.4" cy="26" r="0.9" fill="#2f7a2f"/>
</svg></svg>
<svg class="b" style="left:793.0px;top:94px" width="32" height="32" viewBox="0 0 32 32"><svg x="0" y="0" width="32" height="32" viewBox="0 0 32 32" style="overflow:visible"><svg x="0" y="0" width="32" height="32" viewBox="0 0 32 32" style="overflow:visible">
<g transform="translate(6.4,2.6)">
<path d="M17.2 7.5 C16.5 3.8 13.8 1.8 10.5 1.8 C6.5 1.8 4 4.5 4.2 8.5 C4.4 12 5.6 14 5.6 17 C5.6 20 3.8 22 1.8 23.8 C5 22.6 7.5 23.2 11.5 23.8" fill="none" stroke="#4fae46" stroke-width="3.8" stroke-linecap="round"/>
<path d="M17.2 7.5 C16.5 3.8 13.8 1.8 10.5 1.8 C6.5 1.8 4 4.5 4.2 8.5 C4.4 12 5.6 14 5.6 17 C5.6 20 3.8 22 1.8 23.8 C5 22.6 7.5 23.2 11.5 23.8" fill="none" stroke="#71d66b" stroke-width="2.6" stroke-linecap="round"/>
<path d="M1.2 12.8 H11.8" stroke="#4fae46" stroke-width="3.4" stroke-linecap="round"/>
<path d="M1.2 12.8 H11.8" stroke="#71d66b" stroke-width="2.2" stroke-linecap="round"/>
</g>
</svg>
<rect x="17.2" y="17" width="13.6" height="13.4" fill="#fff" stroke="#8c8c8c" stroke-width="0.8"/>
<rect x="17.2" y="17" width="13.6" height="3" fill="#4f8ed0"/>
<g stroke="#555" stroke-width="0.7"><path d="M19 22.3 H29"/><path d="M19 24.3 H29"/><path d="M19 26.3 H29"/><path d="M19 28.3 H29"/></g>
</svg></svg>
<svg class="b" style="left:865.0px;top:94px" width="32" height="32" viewBox="0 0 32 32"><svg x="0" y="0" width="32" height="32" viewBox="0 0 32 32" style="overflow:visible"><svg x="0" y="0" width="32" height="32" viewBox="0 0 32 32" style="overflow:visible">
<g transform="translate(6.4,2.6)">
<path d="M17.2 7.5 C16.5 3.8 13.8 1.8 10.5 1.8 C6.5 1.8 4 4.5 4.2 8.5 C4.4 12 5.6 14 5.6 17 C5.6 20 3.8 22 1.8 23.8 C5 22.6 7.5 23.2 11.5 23.8" fill="none" stroke="#4fae46" stroke-width="3.8" stroke-linecap="round"/>
<path d="M17.2 7.5 C16.5 3.8 13.8 1.8 10.5 1.8 C6.5 1.8 4 4.5 4.2 8.5 C4.4 12 5.6 14 5.6 17 C5.6 20 3.8 22 1.8 23.8 C5 22.6 7.5 23.2 11.5 23.8" fill="none" stroke="#71d66b" stroke-width="2.6" stroke-linecap="round"/>
<path d="M1.2 12.8 H11.8" stroke="#4fae46" stroke-width="3.4" stroke-linecap="round"/>
<path d="M1.2 12.8 H11.8" stroke="#71d66b" stroke-width="2.2" stroke-linecap="round"/>
</g>
</svg>
<path d="M23.7 17 L31.3 30 L16.2 30Z" fill="#f7c21a" stroke="#d08a10" stroke-width="0.9" stroke-linejoin="round"/>
<rect x="22.9" y="20.5" width="1.6" height="5.5" fill="#222"/><rect x="22.9" y="27" width="1.6" height="1.6" fill="#222"/>
</svg></svg>
<div class="b" style="left:0px;top:186px;width:1632px;height:918px;background:#fff"></div>
<div class="b" style="left:1px;top:185px;width:32px;height:2px;background:#000"></div>
<div class="b" style="left:1px;top:187px;width:32px;height:53px;background:#efefef"></div>
<div class="b" style="left:1px;top:213px;width:32px;height:1px;background:#fff"></div>
<svg class="b" style="left:4.0px;top:190px" width="20" height="20" viewBox="0 0 32 32"><svg x="0" y="0" width="32" height="32" viewBox="0 0 32 32" style="overflow:visible">
<rect x="20" y="4.4" width="4" height="7" fill="#8bb0e6"/>
<path d="M6 13 L6 28.5 L25.8 28.5 L25.8 13 L16 5Z" fill="#e9eaec" stroke="#a4a4a4" stroke-width="0.9"/>
<rect x="11.3" y="15.2" width="9.5" height="9.3" fill="#7cc1f5" stroke="#5a8fc8" stroke-width="0.7"/>
<rect x="15.4" y="15.2" width="1.3" height="9.3" fill="#d0e6f7"/>
<path d="M3.2 16.8 L16 5 L28.8 16.8" fill="none" stroke="#79b03a" stroke-width="3.2" stroke-linejoin="miter"/>
<path d="M3.2 16.8 L16 5 L28.8 16.8" fill="none" stroke="#acdc60" stroke-width="1.8" stroke-linejoin="miter"/>
</svg></svg>
<svg class="b" style="left:4px;top:217px;" width="20" height="20" viewBox="0 0 20 20"><rect x="1.5" y="1" width="17" height="17" rx="3" fill="url(#gInfo)" stroke="#7a9ad0" stroke-width="0.6"/><rect x="8.8" y="7.5" width="2.4" height="7" fill="#fff"/><rect x="7.5" y="14" width="5" height="1.5" fill="#fff"/><circle cx="10" cy="5" r="1.3" fill="#fff"/></svg>
<div class="b" style="left:46px;top:186px;width:1px;height:918px;background:#000"></div>
<div class="b" style="left:60px;top:186px;width:1px;height:918px;background:#000"></div>
<div class="b" style="left:62px;top:186px;width:1570px;height:918px;background:#eeeeee"></div>
<svg class="b" style="left:35px;top:640px;" width="8" height="18" viewBox="0 0 8 18"><rect x="1" y="2" width="5" height="1" fill="#555"/><rect x="1" y="4" width="5" height="1" fill="#555"/><rect x="1" y="6" width="5" height="1" fill="#555"/><rect x="1" y="8" width="5" height="1" fill="#555"/><rect x="1" y="10" width="5" height="1" fill="#555"/><rect x="1" y="12" width="5" height="1" fill="#555"/><rect x="1" y="14" width="5" height="1" fill="#555"/><rect x="1" y="16" width="5" height="1" fill="#555"/></svg>
<div class="b" style="left:0px;top:0px;width:1px;height:1104px;background:#dedede"></div>
<svg class="b" style="left:50px;top:645px;" width="6" height="9" viewBox="0 0 6 9"><polygon points="1,1 5,4.5 1,8" fill="#555"/></svg>
<div class="t" style="left:1465.5px;top:221.8px;font-size:14.7px;color:#777;font-weight:normal;">Refresh</div>
<div class="t" style="left:1525.8px;top:221.8px;font-size:14.7px;color:#777;font-weight:normal;">Edit</div>
<svg class="b" style="left:1460px;top:233px;" width="100" height="4" viewBox="0 0 100 4"><rect x="5.5" y="1" width="5" height="2" fill="#888"/><rect x="15.0" y="1" width="5" height="2" fill="#888"/><rect x="24.5" y="1" width="5" height="2" fill="#888"/><rect x="34.0" y="1" width="5" height="2" fill="#888"/><rect x="43.5" y="1" width="5" height="2" fill="#888"/><rect x="53.0" y="1" width="5" height="2" fill="#888"/><rect x="65.3" y="1" width="5" height="2" fill="#888"/><rect x="74.8" y="1" width="5" height="2" fill="#888"/><rect x="84.3" y="1" width="5" height="2" fill="#888"/></svg>
<svg class="b" style="left:1562px;top:215px;" width="20" height="22" viewBox="0 0 20 22"><path d="M3 8.5 V19.5 H17 V8.5" fill="none" stroke="#777" stroke-width="1.6"/><path d="M10 13 V3.5" stroke="#777" stroke-width="1.8"/><path d="M6.3 6.8 L10 3 L13.7 6.8" fill="none" stroke="#777" stroke-width="1.6"/></svg>
<div class="b" style="left:1579px;top:206px;width:49px;height:41px;border:5px solid #000;background:#efefef"></div>
<svg class="b" style="left:1592px;top:216px;" width="24" height="22" viewBox="0 0 24 22"><g stroke="#888" stroke-width="1.4" fill="none">
<path d="M5.8 3 V18.5"/><path d="M12.1 3 V18.5"/><path d="M18 3 V18.5"/></g>
<g stroke="#777" stroke-width="1.4" fill="#efefef">
<circle cx="5.8" cy="13.9" r="2.4"/><circle cx="12.1" cy="7.6" r="2.4"/><circle cx="18" cy="13.4" r="2.4"/></g></svg>
<div class="b" style="left:80px;top:253px;width:1536px;height:839px;background:#fff;border-radius:3px;box-shadow:0 1px 3px rgba(0,0,0,0.16)"></div>
<div class="b" style="left:427px;top:253px;width:435px;height:34px;background:#f7f7f7;border-left:1px solid #e2e2e2;border-bottom:1px solid #dedede;border-radius:0 0 2px 2px"></div>
<div class="t" style="left:438.0px;top:263.3px;font-size:13.2px;color:#555;font-weight:normal;">Overdue Services</div>
<div class="b" style="left:862px;top:253px;width:458px;height:34px;background:#f7f7f7;border-left:1px solid #e2e2e2;border-bottom:1px solid #dedede;border-radius:0 0 2px 2px"></div>
<div class="t" style="left:873.0px;top:263.3px;font-size:13.2px;color:#555;font-weight:normal;">Financial Summary</div>
<div class="b" style="left:1320px;top:253px;width:296px;height:34px;background:#f7f7f7;border-left:1px solid #e2e2e2;border-bottom:1px solid #dedede;border-radius:0 0 2px 2px"></div>
<div class="t" style="left:1331.0px;top:263.3px;font-size:13.2px;color:#555;font-weight:normal;">Actions</div>
<div class="t" style="left:90.0px;top:263.3px;font-size:13.2px;color:#555;font-weight:normal;">All Services</div>
<div class="t" style="left:92.0px;top:309.9px;font-size:13.1px;color:#666;font-weight:normal;">Status</div>
<div class="b" style="left:92px;top:333px;width:207px;height:101px;border:1px solid #dcdcdc"></div>
<div class="b" style="left:112px;top:338px;width:16px;height:16px;border:1px solid #d4d4d4;border-radius:2px;background:#fff"></div>
<div class="t" style="left:141.0px;top:343.3px;font-size:11.5px;color:#999;font-weight:normal;">(All)</div>
<div class="b" style="left:112px;top:372px;width:16px;height:16px;border:1px solid #d4d4d4;border-radius:2px;background:#fff"></div>
<svg class="b" style="left:100px;top:378px;" width="9" height="11" viewBox="0 0 9 11"><polygon points="1.8,1.3 7.5,5.5 1.8,9.7" fill="#8f8f8f"/></svg>
<div class="t" style="left:141.0px;top:378.3px;font-size:11.5px;color:#333;font-weight:normal;">Live</div>
<div class="b" style="left:112px;top:402px;width:16px;height:16px;border:1px solid #d4d4d4;border-radius:2px;background:#fff"></div>
<svg class="b" style="left:100px;top:407px;" width="9" height="11" viewBox="0 0 9 11"><polygon points="1.8,1.3 7.5,5.5 1.8,9.7" fill="#8f8f8f"/></svg>
<div class="t" style="left:141.0px;top:407.3px;font-size:11.5px;color:#333;font-weight:normal;">Not Live</div>
<div class="t" style="left:92.0px;top:452.4px;font-size:13.1px;color:#666;font-weight:normal;">Asset Scope</div>
<div class="b" style="left:92px;top:475px;width:207px;height:101px;border:1px solid #dcdcdc"></div>
<div class="b" style="left:112px;top:482px;width:16px;height:16px;border:1px solid #d4d4d4;border-radius:2px;background:#fff"></div>
<div class="t" style="left:141.0px;top:486.3px;font-size:11.5px;color:#999;font-weight:normal;">(All)</div>
<div class="b" style="left:112px;top:514px;width:16px;height:16px;border:1px solid #d4d4d4;border-radius:2px;background:#fff"></div>
<svg class="b" style="left:100px;top:519.5px;" width="9" height="11" viewBox="0 0 9 11"><polygon points="1.8,1.3 7.5,5.5 1.8,9.7" fill="#8f8f8f"/></svg>
<div class="t" style="left:141.0px;top:519.8px;font-size:11.5px;color:#333;font-weight:normal;">Area Office</div>
<div class="b" style="left:112px;top:543px;width:16px;height:16px;border:1px solid #d4d4d4;border-radius:2px;background:#fff"></div>
<svg class="b" style="left:100px;top:548.5px;" width="9" height="11" viewBox="0 0 9 11"><polygon points="1.8,1.3 7.5,5.5 1.8,9.7" fill="#8f8f8f"/></svg>
<div class="t" style="left:141.0px;top:548.8px;font-size:11.5px;color:#333;font-weight:normal;">Asset Type</div>
<div class="b" style="left:112px;top:572px;width:16px;height:3px;border:1px solid #d0d0d0;border-bottom:none"></div>
<div class="t" style="left:92.0px;top:594.4px;font-size:13.1px;color:#666;font-weight:normal;">Service Types</div>
<div class="b" style="left:92px;top:617px;width:207px;height:260px;border:1px solid #dcdcdc"></div>
<div class="b" style="left:112px;top:624px;width:16px;height:16px;border:1px solid #d4d4d4;border-radius:2px;background:#fff"></div>
<div class="t" style="left:141.0px;top:628.3px;font-size:11.5px;color:#999;font-weight:normal;">(All)</div>
<div class="b" style="left:112px;top:656px;width:16px;height:16px;border:1px solid #d4d4d4;border-radius:2px;background:#fff"></div>
<svg class="b" style="left:100px;top:661.5px;" width="9" height="11" viewBox="0 0 9 11"><polygon points="1.8,1.3 7.5,5.5 1.8,9.7" fill="#8f8f8f"/></svg>
<div class="t" style="left:141.0px;top:661.8px;font-size:11.5px;color:#333;font-weight:normal;">Asbestos Reinspections</div>
<div class="b" style="left:112px;top:685px;width:16px;height:16px;border:1px solid #d4d4d4;border-radius:2px;background:#fff"></div>
<svg class="b" style="left:100px;top:690.5px;" width="9" height="11" viewBox="0 0 9 11"><polygon points="1.8,1.3 7.5,5.5 1.8,9.7" fill="#8f8f8f"/></svg>
<div class="t" style="left:141.0px;top:690.8px;font-size:11.5px;color:#333;font-weight:normal;">Electrical Servicing Progra...</div>
<div class="b" style="left:112px;top:714px;width:16px;height:16px;border:1px solid #d4d4d4;border-radius:2px;background:#fff"></div>
<svg class="b" style="left:100px;top:719.5px;" width="9" height="11" viewBox="0 0 9 11"><polygon points="1.8,1.3 7.5,5.5 1.8,9.7" fill="#8f8f8f"/></svg>
<div class="t" style="left:141.0px;top:719.8px;font-size:11.5px;color:#333;font-weight:normal;">EPC Surveys</div>
<div class="b" style="left:112px;top:743px;width:16px;height:16px;border:1px solid #d4d4d4;border-radius:2px;background:#fff"></div>
<svg class="b" style="left:100px;top:748.5px;" width="9" height="11" viewBox="0 0 9 11"><polygon points="1.8,1.3 7.5,5.5 1.8,9.7" fill="#8f8f8f"/></svg>
<div class="t" style="left:141.0px;top:748.8px;font-size:11.5px;color:#333;font-weight:normal;">Fire Door Servicing</div>
<div class="b" style="left:112px;top:772px;width:16px;height:16px;border:1px solid #d4d4d4;border-radius:2px;background:#fff"></div>
<svg class="b" style="left:100px;top:777.5px;" width="9" height="11" viewBox="0 0 9 11"><polygon points="1.8,1.3 7.5,5.5 1.8,9.7" fill="#8f8f8f"/></svg>
<div class="t" style="left:141.0px;top:777.8px;font-size:11.5px;color:#333;font-weight:normal;">Fire Risk Assessments</div>
<div class="b" style="left:112px;top:801px;width:16px;height:16px;border:1px solid #d4d4d4;border-radius:2px;background:#fff"></div>
<svg class="b" style="left:100px;top:806.5px;" width="9" height="11" viewBox="0 0 9 11"><polygon points="1.8,1.3 7.5,5.5 1.8,9.7" fill="#8f8f8f"/></svg>
<div class="t" style="left:141.0px;top:806.8px;font-size:11.5px;color:#333;font-weight:normal;">Gas &amp; Oil Servicing Progra...</div>
<div class="b" style="left:112px;top:830px;width:16px;height:16px;border:1px solid #d4d4d4;border-radius:2px;background:#fff"></div>
<svg class="b" style="left:100px;top:835.5px;" width="9" height="11" viewBox="0 0 9 11"><polygon points="1.8,1.3 7.5,5.5 1.8,9.7" fill="#8f8f8f"/></svg>
<div class="t" style="left:141.0px;top:835.8px;font-size:11.5px;color:#333;font-weight:normal;">Health and Safety Assessm...</div>
<div class="b" style="left:112px;top:859px;width:16px;height:16px;border:1px solid #d4d4d4;border-radius:2px;background:#fff"></div>
<svg class="b" style="left:100px;top:864.5px;" width="9" height="11" viewBox="0 0 9 11"><polygon points="1.8,1.3 7.5,5.5 1.8,9.7" fill="#8f8f8f"/></svg>
<div class="b" style="left:130px;top:855px;width:160px;height:21px;overflow:hidden"><div class="t" style="left:11px;top:9.8px;font-size:11.5px;color:#333">Legionella Assessments</div></div>
<div class="b" style="left:92px;top:884px;width:207px;height:196px;border:1px solid #dcdcdc"></div>
<div class="t" style="left:-204.5px;width:800px;text-align:center;top:966.4px;font-size:19.6px;color:#555;font-weight:normal;">3,163</div>
<div class="t" style="left:-204.5px;width:800px;text-align:center;top:991.3px;font-size:11.5px;color:#999;font-weight:normal;">Service Count</div>
<div class="b" style="left:305px;top:299px;width:465px;height:427px;border:1px solid #dedede"></div>
<svg class="b" style="left:0;top:0" width="1632" height="1104" viewBox="0 0 1632 1104"><path d="M448.8 510.7 A83.2 83.2 0 1 0 615.2 510.7 A83.2 83.2 0 1 0 448.8 510.7 Z M491 510.7 A41 41 0 1 1 573 510.7 A41 41 0 1 1 491 510.7 Z" fill="#5f6b93" fill-rule="evenodd"/><polygon points="573,510.09999999999997 615.7,508.09999999999997 615.7,510.9 573,511.59999999999997" fill="#a86a7a"/><line x1="573" y1="510.8" x2="615.2" y2="509.4" stroke="#e8d8dc" stroke-width="0.6"/><line x1="573" y1="510.2" x2="615.2" y2="508.3" stroke="#b05a6a" stroke-width="0.7"/><polyline points="614.5,508.2 627.5,456.5 678,456.5" fill="none" stroke="#7b6a8e" stroke-width="1.1"/><polyline points="614.5,508.6 627.5,498.5 660,498.5" fill="none" stroke="#86915f" stroke-width="1.1"/><polyline points="614.5,509.2 627.5,534.5 646,534.5" fill="none" stroke="#925b6d" stroke-width="1.1"/><polyline points="614.5,509.6 627.5,564.5 646,564.5" fill="none" stroke="#b08a4e" stroke-width="1.1"/><polyline points="614.5,510 627.5,600.5 655,600.5" fill="none" stroke="#5c8a91" stroke-width="1.1"/><polyline points="614.5,510.4 627.5,636.5 655,636.5" fill="none" stroke="#b84a4e" stroke-width="1.1"/><polyline points="614.5,510.8 627.5,666.5 660,666.5" fill="none" stroke="#b05aa0" stroke-width="1.1"/><polyline points="415,513 440,513 449,511.5" fill="none" stroke="#5f6b93" stroke-width="1"/></svg>
<div class="b" style="left:312px;top:501px;width:104px;height:24px;background:#5f6b93"></div>
<div class="t" style="left:-36.2px;width:800px;text-align:center;top:507.8px;font-size:11.5px;color:#fff;font-weight:normal;">Planned: 99.24%</div>
<div class="b" style="left:678px;top:438px;width:74px;height:36px;background:#7b6a8e"></div>
<div class="t" style="left:686.0px;top:445.3px;font-size:11.6px;color:#fff;font-weight:normal;">No Access:</div>
<div class="t" style="left:686.0px;top:457.3px;font-size:11.6px;color:#fff;font-weight:normal;">0.09%</div>
<div class="b" style="left:660px;top:474px;width:92px;height:48px;background:#86915f"></div>
<div class="t" style="left:668.0px;top:481.3px;font-size:11.6px;color:#fff;font-weight:normal;">Complete</div>
<div class="t" style="left:668.0px;top:493.3px;font-size:11.6px;color:#fff;font-weight:normal;">Awaiting Cert:</div>
<div class="t" style="left:668.0px;top:505.3px;font-size:11.6px;color:#fff;font-weight:normal;">0.03%</div>
<div class="b" style="left:646px;top:522px;width:106px;height:24px;background:#925b6d"></div>
<div class="t" style="left:654.0px;top:529.3px;font-size:11.6px;color:#fff;font-weight:normal;">Complete: 0.47%</div>
<div class="b" style="left:646px;top:546px;width:106px;height:36px;background:#b08a4e"></div>
<div class="t" style="left:654.0px;top:553.3px;font-size:11.6px;color:#fff;font-weight:normal;">Awaiting Second</div>
<div class="t" style="left:654.0px;top:565.3px;font-size:11.6px;color:#fff;font-weight:normal;">Visit: 0.03%</div>
<div class="b" style="left:655px;top:582px;width:97px;height:36px;background:#5c8a91"></div>
<div class="t" style="left:663.0px;top:589.3px;font-size:11.6px;color:#fff;font-weight:normal;">50% Complete:</div>
<div class="t" style="left:663.0px;top:601.3px;font-size:11.6px;color:#fff;font-weight:normal;">0.03%</div>
<div class="b" style="left:655px;top:618px;width:97px;height:36px;background:#b84a4e"></div>
<div class="t" style="left:663.0px;top:625.3px;font-size:11.6px;color:#fff;font-weight:normal;">75% Complete:</div>
<div class="t" style="left:663.0px;top:637.3px;font-size:11.6px;color:#fff;font-weight:normal;">0.06%</div>
<div class="b" style="left:660px;top:654px;width:92px;height:24px;background:#b05aa0"></div>
<div class="t" style="left:668.0px;top:661.3px;font-size:11.6px;color:#fff;font-weight:normal;">Started: 0.03%</div>
<div class="b" style="left:776px;top:299px;width:828px;height:427px;border:1px solid #dedede"></div>
<svg class="b" style="left:0;top:0" width="1632" height="1104" viewBox="0 0 1632 1104"><line x1="1068.5" y1="336" x2="1068.5" y2="702" stroke="#d9d9d9" stroke-width="1"/><line x1="1168.5" y1="336" x2="1168.5" y2="702" stroke="#d9d9d9" stroke-width="1"/><line x1="1268.5" y1="336" x2="1268.5" y2="702" stroke="#d9d9d9" stroke-width="1"/><line x1="1368.5" y1="336" x2="1368.5" y2="702" stroke="#d9d9d9" stroke-width="1"/><line x1="1468.5" y1="336" x2="1468.5" y2="702" stroke="#d9d9d9" stroke-width="1"/><line x1="1568.5" y1="336" x2="1568.5" y2="702" stroke="#d9d9d9" stroke-width="1"/><line x1="1068" y1="336.5" x2="1569" y2="336.5" stroke="#d9d9d9" stroke-width="1"/><line x1="1068" y1="701.5" x2="1569" y2="701.5" stroke="#d9d9d9" stroke-width="1"/><rect x="1069" y="363.8" width="1.5" height="16.8" fill="#5f8a91"/><rect x="1069" y="412.8" width="7" height="16.8" fill="#5f8a91"/><rect x="1069" y="437.2" width="18" height="16.8" fill="#5f8a91"/><rect x="1069" y="461.6" width="1.5" height="16.8" fill="#5f8a91"/><rect x="1069" y="486.1" width="9" height="16.8" fill="#5f8a91"/><rect x="1069" y="510.6" width="1.5" height="16.8" fill="#5f8a91"/><rect x="1069" y="559.5" width="4" height="16.8" fill="#5f8a91"/><rect x="1069" y="583.9" width="419" height="16.8" fill="#5f8a91"/><rect x="1069" y="608.4" width="164" height="16.8" fill="#5f8a91"/><rect x="1069" y="657.2" width="1.5" height="16.8" fill="#5f8a91"/></svg>
<div class="t" style="left:257.5px;width:800px;text-align:right;top:344.2px;font-size:11.5px;color:#666;font-weight:normal;">Sprinkler Service</div>
<div class="t" style="left:257.5px;width:800px;text-align:right;top:368.6px;font-size:11.5px;color:#666;font-weight:normal;">Room Heaters</div>
<div class="t" style="left:257.5px;width:800px;text-align:right;top:393.1px;font-size:11.5px;color:#666;font-weight:normal;">Legionella Assessments</div>
<div class="t" style="left:257.5px;width:800px;text-align:right;top:417.5px;font-size:11.5px;color:#666;font-weight:normal;">Health and Safety Assessments</div>
<div class="t" style="left:257.5px;width:800px;text-align:right;top:442.0px;font-size:11.5px;color:#666;font-weight:normal;">Fire Risk Assessments</div>
<div class="t" style="left:257.5px;width:800px;text-align:right;top:466.4px;font-size:11.5px;color:#666;font-weight:normal;">Fire Risk Actions</div>
<div class="t" style="left:257.5px;width:800px;text-align:right;top:490.9px;font-size:11.5px;color:#666;font-weight:normal;">Fire Door Inspection</div>
<div class="t" style="left:257.5px;width:800px;text-align:right;top:515.3px;font-size:11.5px;color:#666;font-weight:normal;">Fire Alarm Test</div>
<div class="t" style="left:257.5px;width:800px;text-align:right;top:539.8px;font-size:11.5px;color:#666;font-weight:normal;">EPC Surveys</div>
<div class="t" style="left:257.5px;width:800px;text-align:right;top:564.2px;font-size:11.5px;color:#666;font-weight:normal;">Electrical Services</div>
<div class="t" style="left:257.5px;width:800px;text-align:right;top:588.7px;font-size:11.5px;color:#666;font-weight:normal;">Boiler</div>
<div class="t" style="left:257.5px;width:800px;text-align:right;top:613.1px;font-size:11.5px;color:#666;font-weight:normal;">Asbestos Reinspections</div>
<div class="t" style="left:257.5px;width:800px;text-align:right;top:637.6px;font-size:11.5px;color:#666;font-weight:normal;">Ad Hoc - Fire Risk Assessments Up To 5 Storeys</div>
<div class="t" style="left:257.5px;width:800px;text-align:right;top:662.0px;font-size:11.5px;color:#666;font-weight:normal;">Fire Risk Assessments Up To 5 Storeys</div>
<div class="t" style="left:257.5px;width:800px;text-align:right;top:686.5px;font-size:11.5px;color:#666;font-weight:normal;">Fire Risk Assessments 6+ Storeys and Extra Care</div>
<div class="t" style="left:668.0px;width:800px;text-align:center;top:313.3px;font-size:11.5px;color:#666;font-weight:normal;">0K</div>
<div class="t" style="left:768.0px;width:800px;text-align:center;top:313.3px;font-size:11.5px;color:#666;font-weight:normal;">0.5K</div>
<div class="t" style="left:868.0px;width:800px;text-align:center;top:313.3px;font-size:11.5px;color:#666;font-weight:normal;">1K</div>
<div class="t" style="left:968.0px;width:800px;text-align:center;top:313.3px;font-size:11.5px;color:#666;font-weight:normal;">1.5K</div>
<div class="t" style="left:1068.0px;width:800px;text-align:center;top:313.3px;font-size:11.5px;color:#666;font-weight:normal;">2K</div>
<div class="t" style="left:1168.0px;width:800px;text-align:center;top:313.3px;font-size:11.5px;color:#666;font-weight:normal;">2.5K</div>
<div class="b" style="left:305px;top:733px;width:1299px;height:347px;border:1px solid #dedede;overflow:hidden"></div>
<div class="t" style="left:311.0px;top:742.8px;font-size:11.5px;color:#999;font-weight:normal;">UPRN</div>
<div class="t" style="left:474.0px;top:742.8px;font-size:11.5px;color:#999;font-weight:normal;">Address</div>
<div class="t" style="left:636.0px;top:742.8px;font-size:11.5px;color:#999;font-weight:normal;">Service</div>
<div class="t" style="left:798.0px;top:742.8px;font-size:11.5px;color:#999;font-weight:normal;">Due Date</div>
<div class="t" style="left:960.0px;top:742.8px;font-size:11.5px;color:#999;font-weight:normal;">Planned Date</div>
<div class="t" style="left:1122.0px;top:742.8px;font-size:11.5px;color:#999;font-weight:normal;">Completed Date</div>
<div class="t" style="left:1284.0px;top:742.8px;font-size:11.5px;color:#999;font-weight:normal;">Service Status</div>
<div class="t" style="left:1446.0px;top:742.8px;font-size:11.5px;color:#999;font-weight:normal;">Project</div>
<svg class="b" style="left:0;top:0" width="1632" height="1104" viewBox="0 0 1632 1104"><rect x="306" y="760" width="1297" height="2" fill="#dcdcdc"/><rect x="468" y="734" width="1" height="345" fill="#dedede"/><rect x="630" y="734" width="1" height="345" fill="#dedede"/><rect x="792" y="734" width="1" height="345" fill="#dedede"/><rect x="954" y="734" width="1" height="345" fill="#dedede"/><rect x="1116" y="734" width="1" height="345" fill="#dedede"/><rect x="1278" y="734" width="1" height="345" fill="#dedede"/><rect x="1440" y="734" width="1" height="345" fill="#dedede"/><rect x="306" y="788" width="1297" height="1" fill="#dedede"/><rect x="306" y="815" width="1297" height="1" fill="#dedede"/><rect x="306" y="842" width="1297" height="1" fill="#dedede"/><rect x="306" y="869" width="1297" height="1" fill="#dedede"/><rect x="306" y="896" width="1297" height="1" fill="#dedede"/><rect x="306" y="923" width="1297" height="1" fill="#dedede"/><rect x="306" y="950" width="1297" height="1" fill="#dedede"/><rect x="306" y="977" width="1297" height="1" fill="#dedede"/><rect x="306" y="1004" width="1297" height="1" fill="#dedede"/><rect x="306" y="1031" width="1297" height="1" fill="#dedede"/><rect x="306" y="1058" width="1297" height="1" fill="#dedede"/></svg>
<div class="b" style="left:306px;top:762px;width:1297px;height:317px;overflow:hidden">
<div class="t" style="left:5.0px;top:8.7px;font-size:11.5px;color:#333;">12312131233</div>
<div class="t" style="left:168.0px;top:8.7px;font-size:11.5px;color:#333;">1 The Steet The Town The ...</div>
<div class="t" style="left:330.0px;top:8.7px;font-size:11.5px;color:#333;">Asbestos Reinspections</div>
<div class="t" style="left:492.0px;top:8.7px;font-size:11.5px;color:#333;letter-spacing:0.27px;">30/11/2021 23:59</div>
<div class="t" style="left:654.0px;top:8.7px;font-size:11.5px;color:#333;letter-spacing:0.27px;">30/11/2021 23:59</div>
<div class="t" style="left:978.0px;top:8.7px;font-size:11.5px;color:#333;">Planned</div>
<div class="t" style="left:1140.0px;top:8.7px;font-size:11.5px;color:#333;">Asbestos Reinspections</div>
<div class="t" style="left:5.0px;top:35.7px;font-size:11.5px;color:#333;">12312131233</div>
<div class="t" style="left:168.0px;top:35.7px;font-size:11.5px;color:#333;">1 The Steet The Town The ...</div>
<div class="t" style="left:330.0px;top:35.7px;font-size:11.5px;color:#333;">Legionella Assessments</div>
<div class="t" style="left:492.0px;top:35.7px;font-size:11.5px;color:#333;letter-spacing:0.27px;">21/10/2020 00:00</div>
<div class="t" style="left:654.0px;top:35.7px;font-size:11.5px;color:#333;letter-spacing:0.27px;">21/10/2020 00:00</div>
<div class="t" style="left:978.0px;top:35.7px;font-size:11.5px;color:#333;">Planned</div>
<div class="t" style="left:1140.0px;top:35.7px;font-size:11.5px;color:#333;">Legionella Assessments</div>
<div class="t" style="left:5.0px;top:62.7px;font-size:11.5px;color:#333;">12312131234</div>
<div class="t" style="left:168.0px;top:62.7px;font-size:11.5px;color:#333;">2 The Steet The Town The ...</div>
<div class="t" style="left:330.0px;top:62.7px;font-size:11.5px;color:#333;">Legionella Assessments</div>
<div class="t" style="left:492.0px;top:62.7px;font-size:11.5px;color:#333;letter-spacing:0.27px;">12/10/2021 00:00</div>
<div class="t" style="left:654.0px;top:62.7px;font-size:11.5px;color:#333;letter-spacing:0.27px;">12/10/2021 00:00</div>
<div class="t" style="left:978.0px;top:62.7px;font-size:11.5px;color:#333;">Planned</div>
<div class="t" style="left:1140.0px;top:62.7px;font-size:11.5px;color:#333;">Legionella Assessments</div>
<div class="t" style="left:5.0px;top:89.7px;font-size:11.5px;color:#333;">12312131236</div>
<div class="t" style="left:168.0px;top:89.7px;font-size:11.5px;color:#333;">4 The Steet The Town The ...</div>
<div class="t" style="left:330.0px;top:89.7px;font-size:11.5px;color:#333;">Boiler</div>
<div class="t" style="left:492.0px;top:89.7px;font-size:11.5px;color:#333;letter-spacing:0.27px;">30/11/2022 23:59</div>
<div class="t" style="left:654.0px;top:89.7px;font-size:11.5px;color:#333;letter-spacing:0.27px;">16/10/2022 22:59</div>
<div class="t" style="left:816.0px;top:89.7px;font-size:11.5px;color:#333;letter-spacing:0.27px;">16/02/2022 23:59</div>
<div class="t" style="left:978.0px;top:89.7px;font-size:11.5px;color:#333;">Complete</div>
<div class="t" style="left:1140.0px;top:89.7px;font-size:11.5px;color:#333;">Gas &amp; Oil Servicing Progra...</div>
<div class="t" style="left:5.0px;top:116.7px;font-size:11.5px;color:#333;">12312131236</div>
<div class="t" style="left:168.0px;top:116.7px;font-size:11.5px;color:#333;">4 The Steet The Town The ...</div>
<div class="t" style="left:330.0px;top:116.7px;font-size:11.5px;color:#333;">Boiler</div>
<div class="t" style="left:492.0px;top:116.7px;font-size:11.5px;color:#333;letter-spacing:0.27px;">17/07/2025 22:59</div>
<div class="t" style="left:654.0px;top:116.7px;font-size:11.5px;color:#333;letter-spacing:0.27px;">02/06/2025 22:59</div>
<div class="t" style="left:978.0px;top:116.7px;font-size:11.5px;color:#333;">Planned</div>
<div class="t" style="left:1140.0px;top:116.7px;font-size:11.5px;color:#333;">Gas &amp; Oil Servicing Progra...</div>
<div class="t" style="left:5.0px;top:143.7px;font-size:11.5px;color:#333;">12312131236</div>
<div class="t" style="left:168.0px;top:143.7px;font-size:11.5px;color:#333;">4 The Steet The Town The ...</div>
<div class="t" style="left:330.0px;top:143.7px;font-size:11.5px;color:#333;">Room Heaters</div>
<div class="t" style="left:492.0px;top:143.7px;font-size:11.5px;color:#333;letter-spacing:0.27px;">17/07/2025 22:59</div>
<div class="t" style="left:654.0px;top:143.7px;font-size:11.5px;color:#333;letter-spacing:0.27px;">17/07/2025 22:59</div>
<div class="t" style="left:978.0px;top:143.7px;font-size:11.5px;color:#333;">Planned</div>
<div class="t" style="left:1140.0px;top:143.7px;font-size:11.5px;color:#333;">Gas &amp; Oil Servicing Progra...</div>
<div class="t" style="left:5.0px;top:170.7px;font-size:11.5px;color:#333;">12312131241</div>
<div class="t" style="left:168.0px;top:170.7px;font-size:11.5px;color:#333;">9 The Steet The Town The ...</div>
<div class="t" style="left:330.0px;top:170.7px;font-size:11.5px;color:#333;">Room Heaters</div>
<div class="t" style="left:492.0px;top:170.7px;font-size:11.5px;color:#333;letter-spacing:0.27px;">17/07/2025 22:59</div>
<div class="t" style="left:654.0px;top:170.7px;font-size:11.5px;color:#333;letter-spacing:0.27px;">17/07/2025 22:59</div>
<div class="t" style="left:978.0px;top:170.7px;font-size:11.5px;color:#333;">Planned</div>
<div class="t" style="left:1140.0px;top:170.7px;font-size:11.5px;color:#333;">Gas &amp; Oil Servicing Progra...</div>
<div class="t" style="left:5.0px;top:197.7px;font-size:11.5px;color:#333;">12312131242</div>
<div class="t" style="left:168.0px;top:197.7px;font-size:11.5px;color:#333;">10 The Steet The Town The...</div>
<div class="t" style="left:330.0px;top:197.7px;font-size:11.5px;color:#333;">Boiler</div>
<div class="t" style="left:492.0px;top:197.7px;font-size:11.5px;color:#333;letter-spacing:0.27px;">16/08/2025 15:59</div>
<div class="t" style="left:654.0px;top:197.7px;font-size:11.5px;color:#333;letter-spacing:0.27px;">02/07/2025 15:59</div>
<div class="t" style="left:978.0px;top:197.7px;font-size:11.5px;color:#333;">Planned</div>
<div class="t" style="left:1140.0px;top:197.7px;font-size:11.5px;color:#333;">Gas &amp; Oil Servicing Progra...</div>
<div class="t" style="left:5.0px;top:224.7px;font-size:11.5px;color:#333;">12345</div>
<div class="t" style="left:168.0px;top:224.7px;font-size:11.5px;color:#333;">2 Whitehouse Mews Walls...</div>
<div class="t" style="left:330.0px;top:224.7px;font-size:11.5px;color:#333;">Boiler</div>
<div class="t" style="left:492.0px;top:224.7px;font-size:11.5px;color:#333;letter-spacing:0.27px;">17/07/2025 22:59</div>
<div class="t" style="left:654.0px;top:224.7px;font-size:11.5px;color:#333;letter-spacing:0.27px;">02/06/2025 22:59</div>
<div class="t" style="left:978.0px;top:224.7px;font-size:11.5px;color:#333;">Planned</div>
<div class="t" style="left:1140.0px;top:224.7px;font-size:11.5px;color:#333;">Gas &amp; Oil Servicing Progra...</div>
<div class="t" style="left:5.0px;top:251.7px;font-size:11.5px;color:#333;">42312131236</div>
<div class="t" style="left:168.0px;top:251.7px;font-size:11.5px;color:#333;">4 The Wise Steet The Town...</div>
<div class="t" style="left:330.0px;top:251.7px;font-size:11.5px;color:#333;">Boiler</div>
<div class="t" style="left:492.0px;top:251.7px;font-size:11.5px;color:#333;letter-spacing:0.27px;">17/07/2025 22:59</div>
<div class="t" style="left:654.0px;top:251.7px;font-size:11.5px;color:#333;letter-spacing:0.27px;">02/06/2025 22:59</div>
<div class="t" style="left:978.0px;top:251.7px;font-size:11.5px;color:#333;">Planned</div>
<div class="t" style="left:1140.0px;top:251.7px;font-size:11.5px;color:#333;">Gas &amp; Oil Servicing Progra...</div>
<div class="t" style="left:5.0px;top:278.7px;font-size:11.5px;color:#333;">42312131236</div>
<div class="t" style="left:168.0px;top:278.7px;font-size:11.5px;color:#333;">4 The Wise Steet The Town...</div>
<div class="t" style="left:330.0px;top:278.7px;font-size:11.5px;color:#333;">Room Heaters</div>
<div class="t" style="left:492.0px;top:278.7px;font-size:11.5px;color:#333;letter-spacing:0.27px;">17/07/2025 22:59</div>
<div class="t" style="left:654.0px;top:278.7px;font-size:11.5px;color:#333;letter-spacing:0.27px;">17/07/2025 22:59</div>
<div class="t" style="left:978.0px;top:278.7px;font-size:11.5px;color:#333;">Planned</div>
<div class="t" style="left:1140.0px;top:278.7px;font-size:11.5px;color:#333;">Gas &amp; Oil Servicing Progra...</div>
<div class="t" style="left:5.0px;top:305.7px;font-size:11.5px;color:#333;">42312131241</div>
<div class="t" style="left:168.0px;top:305.7px;font-size:11.5px;color:#333;">9 The Wise Steet The Town...</div>
<div class="t" style="left:330.0px;top:305.7px;font-size:11.5px;color:#333;">Boiler</div>
<div class="t" style="left:492.0px;top:305.7px;font-size:11.5px;color:#333;letter-spacing:0.27px;">30/06/2022 21:59</div>
<div class="t" style="left:654.0px;top:305.7px;font-size:11.5px;color:#333;letter-spacing:0.27px;">16/05/2022 21:59</div>
<div class="t" style="left:816.0px;top:305.7px;font-size:11.5px;color:#333;letter-spacing:0.27px;">16/02/2022 23:59</div>
<div class="t" style="left:978.0px;top:305.7px;font-size:11.5px;color:#333;">Complete</div>
<div class="t" style="left:1140.0px;top:305.7px;font-size:11.5px;color:#333;">Gas &amp; Oil Servicing Progra...</div>
</div>
</body></html>
